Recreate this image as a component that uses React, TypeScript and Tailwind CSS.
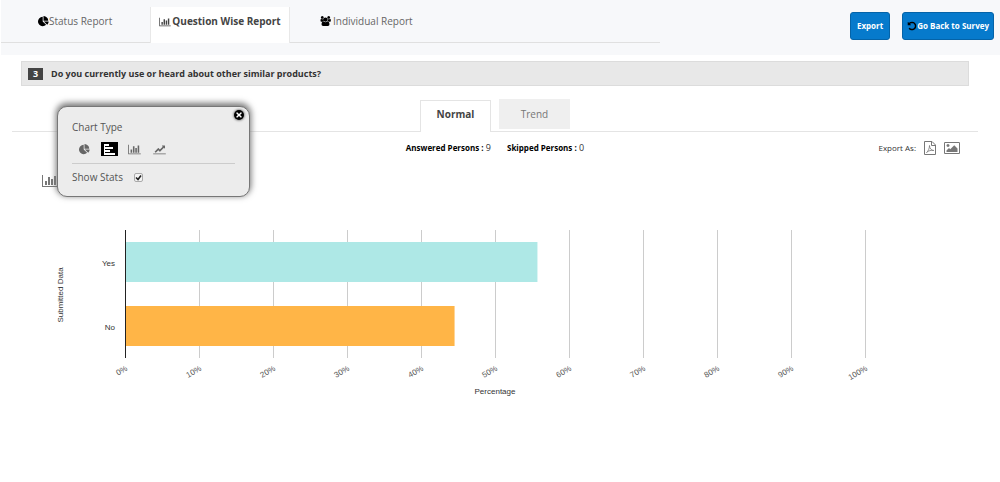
import { useState } from "react";
import { FaTimes } from "react-icons/fa";

const icons = {
  pie: {
    viewBox: "0 0 1792 1792",
    d: "M768 890l546 546q-106 108-247.500 168t-298.500 60q-209 0-385.500-103t-279.500-279.500-103-385.500 103-385.500 279.500-279.500 385.500-103v762zM955 896h773q0 157-60 298.500t-168 247.500zM1664 768h-768v-768q209 0 385.500 103t279.500 279.500 103 385.500z",
  },
  column: {
    viewBox: "0 0 2048 1792",
    d: "M640 896v512h-256v-512h256zM1024 384v1024h-256v-1024h256zM2048 1536v128h-2048v-1536h128v1408h1920zM1408 640v768h-256v-768h256zM1792 256v1152h-256v-1152h256z",
  },
  bar: {
    viewBox: "0 0 13 11",
    d: "M1 0h1v11h-1zM2 0h4v2h-4zM2 3h8v2h-8zM2 6h5v2h-5zM2 9h10v2h-10z",
  },
  line: {
    viewBox: "0 0 2048 1792",
    d: "M2048 1536v128h-2048v-128zM1920 288v435q0 21-19.500 29.500t-35.500-7.500l-121-121-633 633q-10 10-23 10t-23-10l-233-233-416 416-192-192 585-585q10-10 23-10t23 10l233 233 464-464-121-121q-16-16-7.500-35.500t29.500-19.500h435q14 0 23 9t9 23z",
  },
  users: {
    viewBox: "0 0 1920 1792",
    d: "M657 896q-162 5-265 128h-134q-82 0-138-40.500t-56-118.500q0-353 124-353 6 0 43.500 21t97.500 42.500 119 21.500q67 0 133-23-5 37-5 66 0 139 81 256zM1664 1533q0 120-73 189.500t-194 69.500h-874q-121 0-194-69.500t-73-189.500q0-53 3.500-103.500t14-109 26.500-108.500 43-97.500 62-81 85.500-53.500 111.500-20q10 0 43 21.500t73 48 107 48 135 21.500 135-21.500 107-48 73-48 43-21.500q61 0 111.500 20t85.500 53.500 62 81 43 97.500 26.500 108.500 14 109 3.500 103.500zM640 256q0 106-75 181t-181 75-181-75-75-181 75-181 181-75 181 75 75 181zM1344 640q0 159-112.500 271.500t-271.500 112.500-271.500-112.500-112.500-271.500 112.500-271.500 271.500-112.500 271.500 112.500 112.500 271.500zM1920 865q0 78-56 118.500t-138 40.500h-134q-103-123-265-128 81-117 81-256 0-29-5-66 66 23 133 23 59 0 119-21.500t97.500-42.500 43.500-21q124 0 124 353zM1792 256q0 106-75 181t-181 75-181-75-75-181 75-181 181-75 181 75 75 181z",
  },
  image: {
    viewBox: "0 0 2048 1792",
    d: "M704 576q0 80-56 136t-136 56-136-56-56-136 56-136 136-56 136 56 56 136zM1728 960v448h-1408v-192l320-320 160 160 512-512zM1888 256h-1728q-13 0-22.500 9.500t-9.500 22.500v1216q0 13 9.500 22.500t22.500 9.500h1728q13 0 22.500-9.500t9.500-22.500v-1216q0-13-9.500-22.500t-22.500-9.500zM2048 288v1216q0 66-47 113t-113 47h-1728q-66 0-113-47t-47-113v-1216q0-66 47-113t113-47h1728q66 0 113 47t47 113z",
  },
  undo: {
    viewBox: "0 0 1792 1792",
    d: "M1664 896q0 156-61 298t-164 245-245 164-298 61q-172 0-327-72.500t-264-204.500q-7-10-6.500-22.500t8.500-20.500l137-138q10-9 25-9 16 2 23 12 73 95 179 147t225 52q104 0 198.500-40.500t163.500-109.500 109.500-163.500 40.500-198.500-40.500-198.500-109.500-163.500-163.500-109.500-198.500-40.500q-98 0-188 35.500t-160 101.500l137 138q31 30 14 69-17 40-59 40h-448q-26 0-45-19t-19-45v-448q0-42 40-59 39-17 69 14l130 129q107-101 244.500-156.500t284.500-55.500q156 0 298 61t245 164 164 245 61 298z",
  },
};

type IconName = keyof typeof icons;

function Icon({ name, className }: { name: IconName; className?: string }) {
  return (
    <svg viewBox={icons[name].viewBox} className={className} fill="currentColor" aria-hidden="true">
      <path d={icons[name].d} />
    </svg>
  );
}

function PdfIcon() {
  return (
    <svg viewBox="0 0 12 14" className="h-[14px] w-3 text-[#777]" fill="none" stroke="currentColor" aria-hidden="true">
      <path d="M0.500 0.500H8L11.500 4V13.500H0.500ZM7.500 0.500V4.500H11.500" />
      <path d="M2.500 11.500C4 10.500 5.500 7.500 5.500 4.500C5.500 7.500 7.500 9.500 9.800 9.500C7 9 5 9.500 2.500 11.500Z" strokeWidth="0.800" />
    </svg>
  );
}

const chartTypes: { name: IconName; label: string }[] = [
  { name: "pie", label: "Pie chart" },
  { name: "bar", label: "Bar chart" },
  { name: "column", label: "Column chart" },
  { name: "line", label: "Line chart" },
];

const answers = [
  { label: "Yes", percent: 55.6, color: "#aee8e6" },
  { label: "No", percent: 44.4, color: "#ffb547" },
];

const ticks = [0, 10, 20, 30, 40, 50, 60, 70, 80, 90, 100];

function Header() {
  return (
    <header className="ml-px flex h-[55px] items-start justify-between bg-[#f7f8fa]">
      <nav className="mt-[7px] flex h-9 w-[66%] text-[10px] text-[#666]">
        <button className="flex w-[149px] items-center border-b border-[#e0e0e0] pb-[7px] pl-[37px]">
          <Icon name="pie" className="h-[11px] w-[11px] text-black" />
          Status Report
        </button>
        <button className="flex w-[140px] items-center justify-center gap-px border-x border-[#e8e8e8] bg-white pb-[7px] font-bold whitespace-nowrap text-[#444]">
          <Icon name="column" className="h-[10px] w-3" />
          Question Wise Report
        </button>
        <button className="flex flex-1 items-center gap-0.5 border-b border-[#e0e0e0] pb-[7px] pl-[30px]">
          <Icon name="users" className="h-[10px] w-[11px] text-black" />
          Individual Report
        </button>
      </nav>
      <div className="mt-3 mr-1.5 flex gap-3 text-[8px] font-bold text-white">
        <button className="h-7 rounded-[3px] border border-[#0463a8] bg-[#067acc] px-1.5">Export</button>
        <button className="flex h-7 items-center rounded-[3px] border border-[#0463a8] bg-[#067acc] px-1">
          <Icon name="undo" className="h-[10px] w-[10px] text-black" />
          Go Back to Survey
        </button>
      </div>
    </header>
  );
}

function ChartOptions({ onClose }: { onClose: () => void }) {
  const [type, setType] = useState<IconName>("bar");
  const [showStats, setShowStats] = useState(true);

  return (
    <div className="absolute top-[51px] left-[57px] h-[91px] w-[193px] rounded-[10px] border border-[#777] bg-[#ececec] px-[14px] pt-3 text-[10px] leading-4 text-[#555] shadow-[0_-2px_6px_1px_#777]">
      <button
        aria-label="Close"
        onClick={onClose}
        className="absolute top-[3px] right-[5px] flex h-[10px] w-[10px] items-center justify-center rounded-full bg-black text-white shadow-[0_0_2px_1px_#999]"
      >
        <FaTimes className="h-2 w-2" />
      </button>
      <h2>Chart Type</h2>
      <div className="mt-[7px] flex gap-2 border-b border-[#ccc] pb-[7px] pl-1">
        {chartTypes.map((t) => (
          <button
            key={t.name}
            aria-label={t.label}
            onClick={() => setType(t.name)}
            className={`flex h-[14px] w-[17px] items-center justify-center ${
              type === t.name ? "bg-black text-white" : "text-[#666]"
            }`}
          >
            <Icon name={t.name} className="h-[11px] w-[13px]" />
          </button>
        ))}
      </div>
      <label className="mt-[5px] flex items-center gap-[11px]">
        Show Stats
        <span className="relative flex">
          <input
            type="checkbox"
            checked={showStats}
            onChange={(e) => setShowStats(e.target.checked)}
            className="h-[9px] w-[9px] appearance-none rounded-[2px] border border-[#aaa] bg-[#f4f4f4]"
          />
          {showStats && (
            <svg viewBox="0 0 9 9" className="pointer-events-none absolute inset-0 h-[9px] w-[9px]" fill="none">
              <path d="M2 4.500L4 6.500L7 2.500" stroke="#222" strokeWidth="1.600" />
            </svg>
          )}
        </span>
      </label>
    </div>
  );
}

function AnswerChart() {
  return (
    <svg
      viewBox="0 0 1000 180"
      className="w-full font-['Liberation_Sans',sans-serif] text-[8px]"
      role="img"
      aria-label="Submitted data by percentage"
    >
      {ticks.map((t) => (
        <g key={t}>
          <rect x={125 + t * 7.4} y="10" width="1" height="128" fill={t === 0 ? "#222" : "#ccc"} />
          <text
            textAnchor="end"
            fill="#555"
            transform={`translate(${128 + t * 7.4} 150) rotate(-30)`}
          >
            {t}%
          </text>
        </g>
      ))}
      {answers.map((a, i) => (
        <g key={a.label}>
          <rect x="126" y={22 + i * 64} width={a.percent * 7.4} height="40" fill={a.color} />
          <text x="115" y={46 + i * 64} textAnchor="end" fill="#333">
            {a.label}
          </text>
        </g>
      ))}
      <text x="495" y="174" textAnchor="middle" fill="#333">
        Percentage
      </text>
      <text textAnchor="middle" fill="#333" transform="translate(63 75) rotate(-90)">
        Submitted Data
      </text>
    </svg>
  );
}

export default function App() {
  const [optionsOpen, setOptionsOpen] = useState(true);

  return (
    <div className="bg-white font-['Open_Sans',sans-serif]">
      <Header />

      <main className="relative pt-1.5">
        <h1 className="mr-[31px] ml-[21px] flex h-[25px] items-center gap-2 border border-[#dcdcdc] bg-[#e8e8e8] pl-1.5 text-[9px] font-bold text-[#333]">
          <span className="flex h-3 w-[15px] items-center justify-center bg-[#444] text-white">3</span>
          Do you currently use or heard about other similar products?
        </h1>

        <div className="mt-[13px] mr-[22px] ml-3 flex h-[33px] justify-center gap-2 border-b border-[#e4e4e4] text-[10px]">
          <button className="mt-px -mb-px w-[71px] border border-b-0 border-[#e4e4e4] bg-white pb-1 font-bold text-[#444]">
            Normal
          </button>
          <button className="h-[30px] w-[71px] bg-[#efefef] text-[#777]">Trend</button>
        </div>

        <div className="mr-[40px] ml-[30px] grid h-8 grid-cols-[1fr_auto_1fr] items-center text-[9px] text-[#333]">
          <p className="col-start-2 flex gap-4">
            <span>
              <b className="text-[8px] text-black">Answered Persons :</b> 9
            </span>
            <span>
              <b className="text-[8px] text-black">Skipped Persons :</b> 0
            </span>
          </p>
          <div className="flex items-center justify-end gap-2 text-[8px]">
            Export As:
            <button aria-label="Export as PDF">
              <PdfIcon />
            </button>
            <button aria-label="Export as image">
              <Icon name="image" className="h-[14px] w-4 text-[#777]" />
            </button>
          </div>
        </div>

        <button
          aria-label="Chart options"
          onClick={() => setOptionsOpen(!optionsOpen)}
          className="mt-[10px] ml-[42px] block text-[#777]"
        >
          <Icon name="column" className="h-[14px] w-4" />
        </button>
        {optionsOpen && <ChartOptions onClose={() => setOptionsOpen(false)} />}

        <div className="mt-8">
          <AnswerChart />
        </div>
      </main>
    </div>
  );
}
